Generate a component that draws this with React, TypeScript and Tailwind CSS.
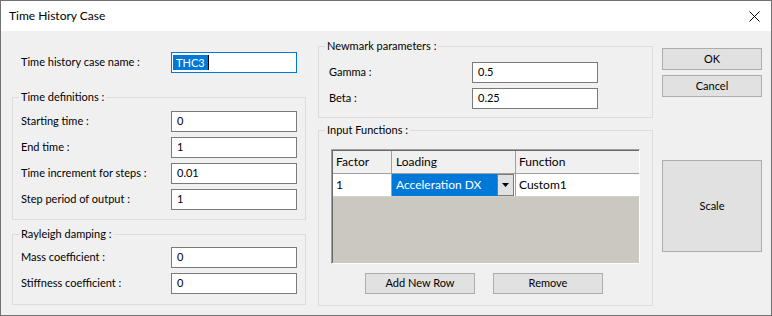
import React from "react";

// Win32-style dialog: Time History Case

const FONT = { fontFamily: "Lato, 'Liberation Sans', sans-serif" };

function Field({ value }: { value: string }) {
  return (
    <div className="w-[126px] h-[21px] border border-[#7a7a7a] bg-white flex items-center pl-[5px] text-[11px] text-black">
      {value}
    </div>
  );
}

function Row({ label, value }: { label: string; value: string }) {
  return (
    <div className="flex items-center h-[21px]">
      <span className="flex-1 text-[11px] text-black">{label}</span>
      <Field value={value} />
    </div>
  );
}

function Group({
  title,
  className,
  children,
}: {
  title: string;
  className: string;
  children: React.ReactNode;
}) {
  return (
    <div className={"relative border border-[#dcdcdc] " + className}>
      <span className="absolute -top-[8px] left-[6px] px-[2px] bg-[#f0f0f0] text-[11px] leading-[14px] text-black">
        {title}
      </span>
      {children}
    </div>
  );
}

function Btn({ label, className }: { label: string; className: string }) {
  return (
    <div
      className={
        "bg-[#e1e1e1] border border-[#adadad] flex items-center justify-center text-[11px] text-black " +
        className
      }
    >
      {label}
    </div>
  );
}

export default function App() {
  return (
    <div
      className="w-[772px] h-[316px] border border-[#727272] flex flex-col bg-[#f0f0f0]"
      style={FONT}
    >
      {/* Title bar */}
      <div className="h-[30px] bg-white flex items-center justify-between pl-[8px] pr-[11px]">
        <span className="text-[12px] text-black">Time History Case</span>
        <svg width="11" height="11" viewBox="0 0 11 11">
          <path d="M0.5 0.5 L10.5 10.5 M10.5 0.5 L0.5 10.5" stroke="#000" strokeWidth="1" />
        </svg>
      </div>

      {/* Body */}
      <div className="flex-1 flex pl-[11px]">
        {/* Left column */}
        <div className="w-[294px] flex flex-col">
          <div className="mt-[21px] h-[21px] flex items-center px-[9px]">
            <span className="flex-1 text-[11px] text-black">Time history case name :</span>
            <div className="w-[126px] h-[21px] border border-[#0078d7] bg-white flex items-center pl-[1px] text-[11px]">
              <span className="bg-[#0078d7] text-white leading-[15px] px-[3px]">THC3</span>
              <span className="w-[1px] h-[15px] bg-black" />
            </div>
          </div>

          <Group title="Time definitions :" className="mt-[24px] h-[123px] pt-[13px] px-[8px] flex flex-col gap-[5px]">
            <Row label="Starting time :" value="0" />
            <Row label="End time :" value="1" />
            <Row label="Time increment for steps :" value="0.01" />
            <Row label="Step period of output :" value="1" />
          </Group>

          <Group title="Rayleigh damping :" className="mt-[14px] h-[71px] pt-[12px] px-[8px] flex flex-col gap-[5px]">
            <Row label="Mass coefficient :" value="0" />
            <Row label="Stiffness coefficient :" value="0" />
          </Group>
        </div>

        {/* Middle column */}
        <div className="w-[335px] ml-[12px] flex flex-col">
          <Group title="Newmark parameters :" className="mt-[15px] h-[72px] pt-[15px] pl-[10px] pr-[54px] flex flex-col gap-[5px]">
            <Row label="Gamma :" value="0.5" />
            <Row label="Beta :" value="0.25" />
          </Group>

          <Group title="Input Functions :" className="mt-[12px] h-[176px] pt-[18px] px-[12px] flex flex-col">
            {/* Grid */}
            <div className="h-[115px] border-t border-l border-[#a0a0a0] border-r border-b border-r-white border-b-white flex flex-col">
              <div className="flex-1 border-t border-l border-[#696969] bg-[#cbc8c0] flex flex-col">
                <div className="h-[23px] flex bg-[#f0f0f0] border-b border-[#a0a0a0] text-[12px] text-black">
                  <div className="w-[59px] border-r border-[#a0a0a0] flex items-center pl-[3px]">Factor</div>
                  <div className="w-[124px] border-r border-[#a0a0a0] flex items-center pl-[4px]">Loading</div>
                  <div className="flex-1 flex items-center pl-[3px]">Function</div>
                </div>
                <div className="h-[23px] flex bg-white border-b border-[#d0d0d0] text-[12px] text-black">
                  <div className="w-[59px] border-r border-[#a0a0a0] flex items-center pl-[3px]">1</div>
                  <div className="w-[124px] border-r border-[#a0a0a0] flex">
                    <div className="w-[105px] bg-[#0078d7] text-white flex items-center pl-[4px]">Acceleration DX</div>
                    <div className="w-[17px] bg-[#e1e1e1] border border-[#7a7a7a] flex items-center justify-center">
                      <svg width="7" height="4" viewBox="0 0 7 4">
                        <path d="M0 0 L7 0 L3.5 4 Z" fill="#000" />
                      </svg>
                    </div>
                  </div>
                  <div className="flex-1 flex items-center pl-[3px]">Custom1</div>
                </div>
              </div>
            </div>
            <div className="mt-[9px] flex gap-[18px] pl-[34px]">
              <Btn label="Add New Row" className="w-[110px] h-[21px]" />
              <Btn label="Remove" className="w-[110px] h-[21px]" />
            </div>
          </Group>
        </div>

        {/* Right column */}
        <div className="w-[100px] ml-[9px] flex flex-col">
          <Btn label="OK" className="mt-[17px] h-[22px]" />
          <Btn label="Cancel" className="mt-[5px] h-[22px]" />
          <Btn label="Scale" className="mt-[63px] h-[92px]" />
        </div>
      </div>
    </div>
  );
}
